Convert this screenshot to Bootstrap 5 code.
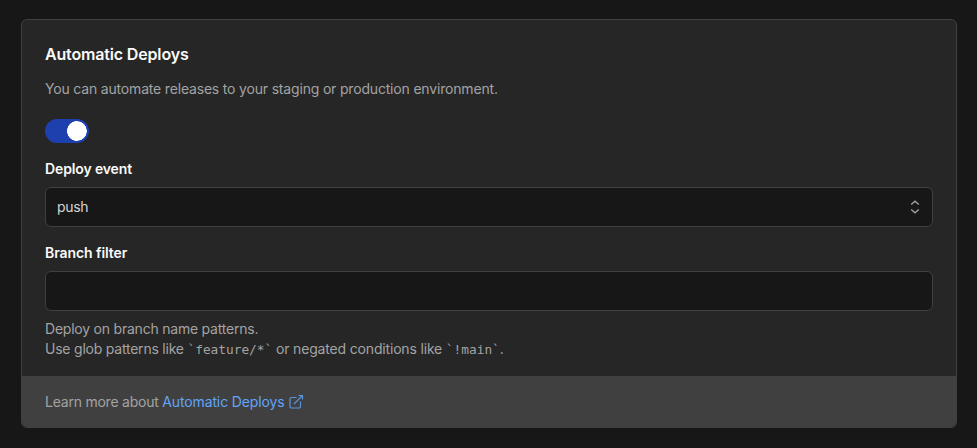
<!DOCTYPE html>
<html lang="en" data-bs-theme="dark">
<head>
<meta charset="utf-8">
<meta name="viewport" content="width=device-width, initial-scale=1">
<title>Automatic Deploys</title>
<link href="https://cdn.jsdelivr.net/npm/bootstrap@5.3.0/dist/css/bootstrap.min.css" rel="stylesheet">
<style>
body{background:#171717;color:#a3a3a3;font-family:Inter,"Liberation Sans",sans-serif;font-size:14px;line-height:20px;letter-spacing:-.18px}
.page{padding:19px 20px 20px 21px}
.deploy-card{--bs-card-bg:#262626;--bs-card-color:#a3a3a3;--bs-card-border-color:#404040;--bs-card-border-radius:6px;--bs-card-inner-border-radius:5px;--bs-card-spacer-x:23px;height:409px}
.deploy-card .card-body{padding-top:22px;padding-bottom:0}
.deploy-card .card-footer{background:#404040;border:0;padding:16px 23px 15px;height:51px}
.deploy-title{color:#fafafa;font-size:16px;line-height:24px;font-weight:600;letter-spacing:-.16px;margin-bottom:13px}
.field-label{color:#fafafa;font-weight:600;display:block;line-height:20px;margin:16px 0 8px;letter-spacing:-.13px}
.branch-label{letter-spacing:-.07px}
.form-switch .deploy-switch{width:44px;height:24px;margin:20px 0 0;float:none;border:2px solid #1e40af;background-color:#1e40af;background-image:radial-gradient(circle at 10px 10px,#fff 9.6px,transparent 10.2px);background-size:20px 20px;background-position:right center;display:block}
.form-switch .deploy-switch:checked{background-color:#1e40af;border-color:#1e40af;background-image:radial-gradient(circle at 10px 10px,#fff 9.6px,transparent 10.2px)}
.field-box{height:40px;background:#171717!important;border:1px solid #404040;border-radius:6px;padding:0 11px;color:#d4d4d4;font-size:14px;letter-spacing:-.3px}
.help{margin-top:8px;letter-spacing:-.22px}
.help-rest{letter-spacing:-.17px}
.mono{font-family:"DejaVu Sans Mono",monospace;font-size:12.8px;line-height:1;letter-spacing:0}
.docs-link{color:#60a5fa;letter-spacing:-.13px}
.lead-in{letter-spacing:-.23px}
.icon-out{margin:2px 0 0 3px}
</style>
</head>
<body>
<main class="page">
<section class="card deploy-card">
<div class="card-body">
<h2 class="deploy-title">Automatic Deploys</h2>
<p class="mb-0">You can automate releases to your staging or production environment.</p>
<div class="form-check form-switch p-0 m-0"><input class="form-check-input deploy-switch" type="checkbox" role="switch" checked aria-label="Automatic deploys"></div>
<label class="field-label" for="event">Deploy event</label>
<button id="event" type="button" class="field-box w-100 d-flex align-items-center justify-content-between"><span>push</span>
<svg width="12" height="16" viewBox="0 0 12 16" fill="none" stroke="#a3a3a3" stroke-width="1.3"><path d="M2.200 5.500 6 2.200l3.800 3.300M2.200 10.500 6 13.800l3.800-3.300"/></svg></button>
<label class="field-label branch-label" for="branch">Branch filter</label>
<input id="branch" type="text" class="form-control field-box shadow-none">
<p class="help mb-0">Deploy on branch name patterns.<br>Use glob patterns like <span class="mono">`feature/*`</span><span class="help-rest"> or negated conditions like </span><span class="mono">`!main`</span>.</p>
</div>
<div class="card-footer d-flex"><span class="lead-in">Learn more about&nbsp;</span><a class="docs-link text-decoration-none d-flex" href="#"><span>Automatic Deploys</span>
<svg class="icon-out" width="16" height="16" viewBox="0 0 16 16" fill="none" stroke="#60a5fa" stroke-width="1.2" stroke-opacity=".85"><path d="M8.500 3.500H3.500A1.500 1.500 0 0 0 2 5V12.500A1.500 1.500 0 0 0 3.500 14H11A1.500 1.500 0 0 0 12.500 12.500V7.500M6 10 14.500 1.500M10.500 1.500H14.500V5.500"/></svg></a></div>
</section>
</main>
<script src="https://cdn.jsdelivr.net/npm/bootstrap@5.3.0/dist/js/bootstrap.bundle.min.js"></script>
</body>
</html>
